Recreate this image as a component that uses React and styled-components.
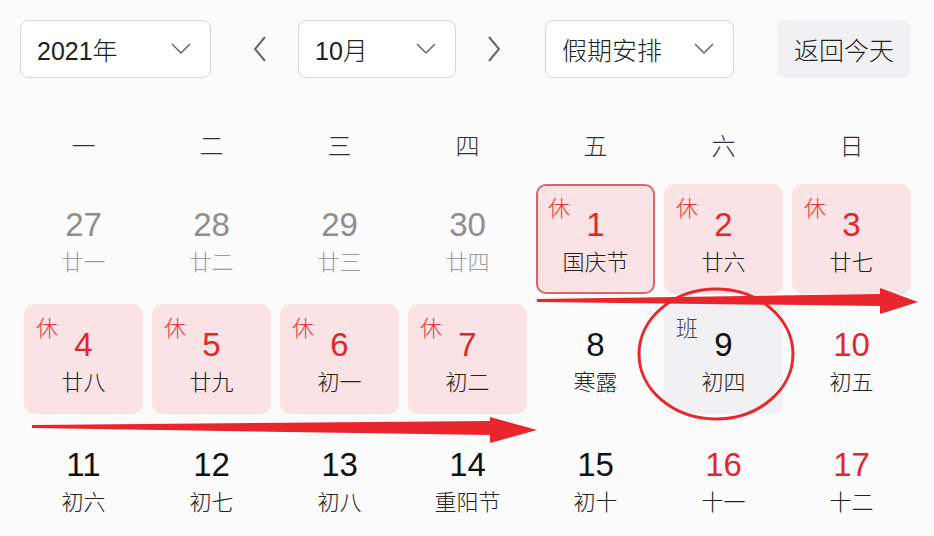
import React from "react";
import styled, { createGlobalStyle } from "styled-components";

const GlobalStyle = createGlobalStyle`
  html, body {
    margin: 0;
    padding: 0;
    background: #fbfbfb;
  }
  body {
    font-family: "Liberation Sans", "Noto Sans CJK SC", sans-serif;
    color: #222;
  }
`;

const weekdays = ["一", "二", "三", "四", "五", "六", "日"];

const days = [
  { n: 27, l: "廿一", kind: "prev" },
  { n: 28, l: "廿二", kind: "prev" },
  { n: 29, l: "廿三", kind: "prev" },
  { n: 30, l: "廿四", kind: "prev" },
  { n: 1, l: "国庆节", kind: "rest", today: true },
  { n: 2, l: "廿六", kind: "rest" },
  { n: 3, l: "廿七", kind: "rest" },
  { n: 4, l: "廿八", kind: "rest" },
  { n: 5, l: "廿九", kind: "rest" },
  { n: 6, l: "初一", kind: "rest" },
  { n: 7, l: "初二", kind: "rest" },
  { n: 8, l: "寒露", kind: "normal" },
  { n: 9, l: "初四", kind: "work" },
  { n: 10, l: "初五", kind: "weekend" },
  { n: 11, l: "初六", kind: "normal" },
  { n: 12, l: "初七", kind: "normal" },
  { n: 13, l: "初八", kind: "normal" },
  { n: 14, l: "重阳节", kind: "normal" },
  { n: 15, l: "初十", kind: "normal" },
  { n: 16, l: "十一", kind: "weekend" },
  { n: 17, l: "十二", kind: "weekend" },
];

const Page = styled.div`
  position: relative;
  width: 934px;
  height: 536px;
  overflow: hidden;
`;

const Toolbar = styled.div`
  display: flex;
  align-items: center;
  padding: 20px 0 0 20px;
  height: 58px;
`;

const Select = styled.div`
  box-sizing: border-box;
  width: ${(p) => p.w}px;
  height: 58px;
  margin-left: ${(p) => p.ml || 0}px;
  display: flex;
  align-items: center;
  justify-content: space-between;
  padding: 0 18px 0 16px;
  border: 1px solid #d6d6d8;
  border-radius: 8px;
  background: #fff;
  font-size: 25px;
  font-weight: 300;
  color: #222;
`;

const Arrow = styled.div`
  width: 48px;
  height: 58px;
  margin-left: ${(p) => p.ml}px;
  display: flex;
  align-items: center;
  justify-content: center;
`;

const TodayButton = styled.div`
  box-sizing: border-box;
  width: 134px;
  height: 58px;
  margin-left: 43px;
  display: flex;
  align-items: center;
  justify-content: center;
  border-radius: 8px;
  background: #f1f1f3;
  font-size: 25px;
  font-weight: 300;
  color: #222;
`;

const WeekRow = styled.div`
  display: grid;
  grid-template-columns: repeat(7, 119px);
  column-gap: 9px;
  padding: 39px 0 13px 24px;
  height: 54px;
  align-items: center;
`;

const Weekday = styled.div`
  text-align: center;
  font-size: 24px;
  font-weight: 300;
  color: #333;
`;

const Grid = styled.div`
  display: grid;
  grid-template-columns: repeat(7, 119px);
  grid-auto-rows: 110px;
  column-gap: 9px;
  row-gap: 10px;
  padding: 0 0 0 24px;
`;

const Cell = styled.div`
  position: relative;
  box-sizing: border-box;
  display: flex;
  flex-direction: column;
  align-items: center;
  padding-top: 21px;
  border-radius: 10px;
  background: ${(p) =>
    p.kind === "rest" ? "#fbe3e5" : p.kind === "work" ? "#f1f1f3" : "transparent"};
  border: 2px solid ${(p) => (p.today ? "#e06364" : "transparent")};
`;

const Num = styled.div`
  font-size: 33px;
  line-height: 36px;
  color: ${(p) =>
    p.kind === "prev"
      ? "#8f8f8f"
      : p.kind === "rest" || p.kind === "weekend"
      ? "#e3262c"
      : "#111"};
`;

const Lunar = styled.div`
  margin-top: 6px;
  font-size: 22px;
  font-weight: 300;
  line-height: 28px;
  color: ${(p) => (p.kind === "prev" ? "#9a9a9a" : "#222")};
`;

const Tag = styled.span`
  position: absolute;
  left: 10px;
  top: 10px;
  font-size: 22px;
  font-weight: 300;
  line-height: 26px;
  color: ${(p) => (p.work ? "#444" : "#e0383b")};
`;

const Overlay = styled.svg`
  position: absolute;
  left: 0;
  top: 0;
  pointer-events: none;
`;

const ChevronDown = () => (
  <svg width="22" height="14" viewBox="0 0 22 14">
    <path d="M2 2 L11 11 L20 2" fill="none" stroke="#666" strokeWidth="1.5" />
  </svg>
);

const ChevronSide = ({ dir }) => (
  <svg width="16" height="28" viewBox="0 0 16 28">
    <path
      d={dir === "left" ? "M13 2 L3 14 L13 26" : "M3 2 L13 14 L3 26"}
      fill="none"
      stroke="#666"
      strokeWidth="2"
    />
  </svg>
);

export default function App() {
  return (
    <>
      <GlobalStyle />
      <Page>
        <Toolbar>
          <Select w={191}>
            <span>2021年</span>
            <ChevronDown />
          </Select>
          <Arrow ml={25}>
            <ChevronSide dir="left" />
          </Arrow>
          <Select w={158} ml={14}>
            <span>10月</span>
            <ChevronDown />
          </Select>
          <Arrow ml={14}>
            <ChevronSide dir="right" />
          </Arrow>
          <Select w={189} ml={27}>
            <span>假期安排</span>
            <ChevronDown />
          </Select>
          <TodayButton>返回今天</TodayButton>
        </Toolbar>

        <WeekRow>
          {weekdays.map((w) => (
            <Weekday key={w}>{w}</Weekday>
          ))}
        </WeekRow>

        <Grid>
          {days.map((d) => (
            <Cell key={d.n + d.kind} kind={d.kind} today={d.today}>
              {d.kind === "rest" && <Tag>休</Tag>}
              {d.kind === "work" && <Tag work>班</Tag>}
              <Num kind={d.kind}>{d.n}</Num>
              <Lunar kind={d.kind}>{d.l}</Lunar>
            </Cell>
          ))}
        </Grid>

        <Overlay width="934" height="536" viewBox="0 0 934 536">
          <polygon
            points="537,299 880,294 880,288 918,302 880,314 880,306 537,302"
            fill="#e8262b"
          />
          <polygon
            points="32,425 490,421 490,417 537,430 490,443 490,435 32,428"
            fill="#e8262b"
          />
          <ellipse
            cx="716"
            cy="354"
            rx="77"
            ry="65"
            fill="none"
            stroke="#e8262b"
            strokeWidth="3"
          />
        </Overlay>
      </Page>
    </>
  );
}
